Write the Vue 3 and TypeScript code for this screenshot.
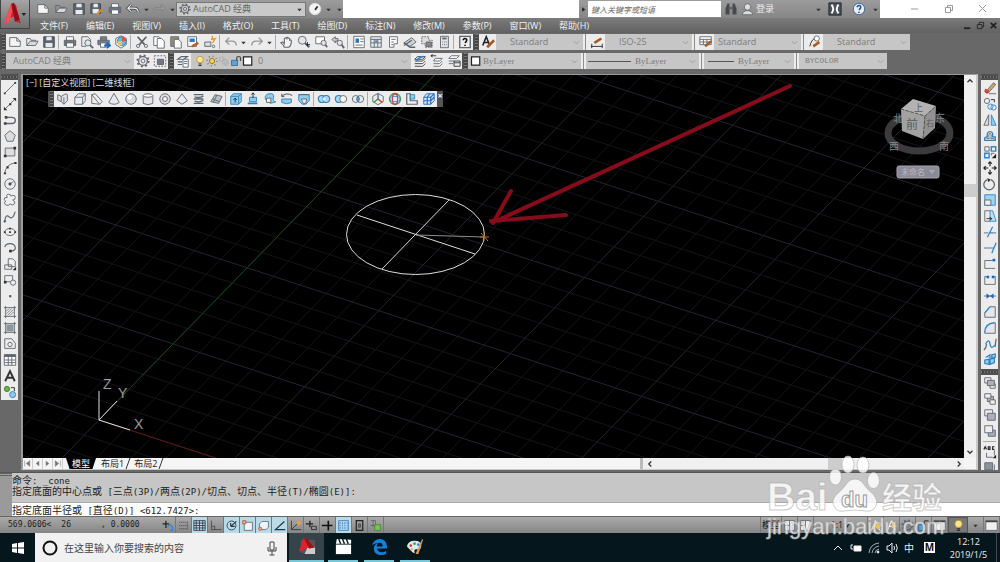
<script setup lang="ts">
import { ref } from 'vue'

interface Tool { icon: string; label: string; on?: boolean }

const icons: Record<string, string> = {
  blank: '<path d="M2 3h8l4 4v6H2z" fill="#f4f4f4"/><path d="M10 3v4h4"/>',
  open: '<path d="M2 12V4h4l1 2h5v2"/><path d="M2 12l4-5h9l-3 5z" fill="#d5d8dc"/>',
  save: '<path d="M2 2h12v12H2z" fill="#5d6670" stroke="#3c444c"/><path d="M5 2h6v4H5zM4 9h8v5H4z" fill="#e8eaec" stroke="none"/>',
  saveas: '<path d="M1 2h11v11H1z" fill="#5d6670" stroke="#3c444c"/><path d="M4 2h5v4H4zM3 8h7v5H3z" fill="#e8eaec" stroke="none"/><path d="M8 14l6-6" stroke="#d98a2b" stroke-width="2.4"/>',
  print: '<path d="M4 6V2h8v4" fill="#fff"/><path d="M1.500 6h13v6h-13z" fill="#6c737a"/><path d="M4 9h8v5H4z" fill="#fff"/>',
  undo: '<path d="M6 3L2 7l4 4M2 7h7q5 0 5 5" stroke="#3f464d" stroke-width="3"/><path d="M6 3L2 7l4 4M2 7h7q5 0 5 5" stroke="#eee" stroke-width="1.200"/>',
  redoTop: '<path d="M10 3l4 4-4 4M14 7H7q-5 0-5 5" stroke-width="2.400" stroke="#737373"/><path d="M10 3l4 4-4 4M14 7H7q-5 0-5 5" stroke="#b4b4b4"/>',
  redo: '<path d="M10 3l4 4-4 4M14 7H7q-5 0-5 5" stroke-width="1.600" stroke="#999"/>',
  gear: '<circle cx="8" cy="8" r="5" stroke-width="1.500"/><circle cx="8" cy="8" r="2.200"/><circle cx="8" cy="8" r="6.500" stroke-width="2" stroke-dasharray="2.200 2.900"/>',
  gauge: '<circle cx="8" cy="8" r="6.500" fill="#f4f4f4" stroke="#ddd"/><path d="M8 9l3-4" stroke="#333" stroke-width="2"/>',
  preview: '<path d="M2 2h7l3 3v3M2 2v11h5"/><circle cx="9" cy="9" r="3.500" fill="#dbe6ef"/><path d="M11.500 11.500L15 15" stroke-width="2.200"/>',
  publish: '<path d="M4 6V2h7v4M1 6h13v5H1z" fill="#777e86"/><path d="M4 9h6v5H4z" fill="#fff"/><path d="M8 12h6m-3-3l4 3-4 3" stroke="#1768c0" stroke-width="2"/>',
  globe: '<path d="M2 4l6-3 6 3v7l-6 4-6-4z" fill="#eee"/><circle cx="9" cy="7" r="5" fill="#67b6e8" stroke="#3d7cb8"/><path d="M9 2a5 5 0 0 1 5 5H9z" fill="#e35445" stroke="none"/><path d="M9 12a5 5 0 0 1-5-5h5z" fill="#e8cf42" stroke="none"/>',
  cut: '<path d="M3 2l8 9M13 2L5 11" stroke-width="2"/><circle cx="3.500" cy="12.500" r="1.800"/><circle cx="12.500" cy="12.500" r="1.800"/>',
  copy: '<path d="M2 2h6l2 2v8H2z" fill="#fff"/><path d="M6 4h5l3 3v8H6z" fill="#fff"/>',
  paste: '<path d="M2 2h9v11H2z" fill="#9a8b78"/><path d="M6 5h5l3 3v7H6z" fill="#fff"/>',
  match: '<path d="M2 2h10v11H2z" fill="#fff"/><path d="M4 4h6v4H4z" fill="#2f76bd" stroke="none"/><path d="M7 13l7-4" stroke="#b5642a" stroke-width="3"/>',
  block: '<path d="M2 8h7v5H2z" fill="#ddd"/><circle cx="12" cy="13" r="1.500"/><path d="M11 1l-1 4 4-1-3 5" stroke="#e79a28" stroke-width="1.600"/>',
  pan: '<path d="M5 14q-1-3-4-5l2-1 2 2V4q1-1 2 0V3q1-1 2 0v1q1-1 2 0v2q2-1 2 1 0 5-3 7z" fill="#f4f4f4" stroke-width="1.200"/>',
  zoomrt: '<circle cx="6" cy="6" r="4.500" fill="#e2e6ea"/><path d="M9 9l5 5" stroke-width="2.200"/><path d="M12 8v5M10 11h5" stroke="#222"/>',
  zoomwin: '<path d="M2 2h10v8H2z" fill="#fff"/><circle cx="11" cy="9" r="3" fill="#dbe2e8"/><path d="M13 11l2 3" stroke-width="2"/>',
  zoomprev: '<path d="M1 5l4-3v2h3v3H5v2z" fill="#c8c8c8"/><circle cx="10" cy="9" r="3" fill="#e2e6ea"/><path d="M12 11l3 4" stroke-width="2"/>',
  props: '<path d="M2 1.500h12v13H2z" fill="#fff"/><path d="M4 4h4v5H4z" fill="#2f76bd" stroke="none"/><path d="M9.500 4.500H13M9.500 7.500H13M4 11.500h8"/>',
  center: '<path d="M2 2h12v12H2z" fill="#e6eaee"/><path d="M2 5h12M6 5v9M10 5v9M2 9h12"/><path d="M7 6h3v3H7z" fill="#4a90d0" stroke="none"/>',
  palette: '<path d="M4 2h9v8H9v4H4z" fill="#fff"/><path d="M6 5h5M6 8h3M6 11h2"/>',
  sheets: '<path d="M1 9l9-6 5 5-7 5z" fill="#cfd2d6"/><path d="M1 12l9-6M1 9l7 5h6" stroke-width="1.500"/>',
  markup: '<path d="M2 2h8v4h4v8H6v-4H2z" stroke-dasharray="2 1" fill="#ddd"/><path d="M7 8h6v5H7z" fill="#888"/>',
  calc: '<path d="M4 1.500h9v13H4z" fill="#e2e4e6"/><path d="M6 4h5" stroke-width="2"/><path d="M6 8h5M6 11h5" stroke-dasharray="1 1"/>',
  help: '<path d="M2 1.500h12v13H2z" fill="#eee" stroke-width="1.500"/><path d="M6 6q0-2 2-2t2 2q0 1-2 3M8 11v1.500" stroke="#111" stroke-width="1.800"/>',
  textstyle: '<path d="M2 12L6 2l4 10M3.500 8.500h5" stroke="#222" stroke-width="1.800"/><path d="M7 14l8-8" stroke="#a85a24" stroke-width="3"/>',
  dimstyle: '<path d="M1 13h13M2 10v5M14 10v5" stroke="#222"/><path d="M5 9l8-5" stroke="#a85a24" stroke-width="3"/>',
  tablestyle: '<path d="M1 2h13v9H1z" fill="#fff"/><path d="M1 5h13M5 5v6M9 5v6M1 8h13"/><path d="M7 13l7-6" stroke="#a85a24" stroke-width="3"/>',
  mleader: '<path d="M2 13q2-8 6-9" stroke="#222"/><circle cx="10" cy="4" r="3" fill="#fff"/><path d="M6 13l7-5" stroke="#a85a24" stroke-width="3"/>',
  select: '<path d="M1.500 2h13v12h-13z" stroke-dasharray="2 1.500"/><path d="M5 6h7v6H5z" fill="#6e7780"/>',
  layers: '<path d="M6 3h7L9 6H2zM2 9h5M2 12h5" fill="#fff" stroke-width="1.300"/><path d="M8 6h6v9H8z" fill="#fff"/><path d="M9 8.500h4M9 11h4"/>',
  bulb: '<circle cx="8" cy="6" r="4.500" fill="#ffe58a" stroke="#b38a2c"/><path d="M6 12h4M6 14h4" stroke="#333" stroke-width="1.500"/>',
  sun: '<circle cx="8" cy="8" r="3.500" fill="#f7cf4b" stroke="#7d6a2e"/><circle cx="8" cy="8" r="6.500" stroke="#7d6a2e" stroke-width="1.800" stroke-dasharray="1.200 3.900"/>',
  freeze: '<path d="M2 3h6v5H2zM6 6h6v6H6z" stroke="#aaa"/><circle cx="11" cy="11" r="3" stroke="#aaa"/>',
  lock: '<path d="M2 7h8v7H2z" fill="#5aa3d9" stroke="#2b6090"/><path d="M9 7V4q0-2 2.500-2T14 4v4" stroke="#444" stroke-width="1.600"/>',
  swatch: '<path d="M2 2.500h11v11H2z" fill="#fff" stroke="#222" stroke-width="1.600"/>',
  layerA: '<path d="M5 3h9l-3 3H2zM2 8h9l3-3M2 11h9l3-3M2 14h9l3-3" stroke="#333" fill="#fff"/><path d="M4 8q3-5 8-5" stroke="#2f84d0" stroke-width="2"/>',
  layerB: '<path d="M1 2h6M1 2l2-1.500M1 2l2 1.500" stroke="#222"/><path d="M6 5h8l-3 3H4zM4 11h7l3-3M4 14h7l3-3" fill="#fff"/>',
  layerC: '<path d="M5 2h9l-3 3H2zM2 8h6M2 11h5" fill="#fff"/><path d="M8 8h7v6H8z" fill="#eee" stroke="#333"/><path d="M8 10h7" stroke="#333"/>',
  line: '<path d="M2 14L14 2" /><path d="M1 13h2v2H1zM13 1h2v2h-2z" fill="#333" stroke="none"/>',
  xline: '<path d="M2 14L14 2"/><path d="M1 11v4h4zM11 1h4v4zM7 7h2.500v2.500H7z" fill="#333" stroke="none"/>',
  pline: '<path d="M3 5h7q4 0 4 3.500T10 12H2" stroke-width="1.600"/><path d="M2 3.500h3v3H2zM1 10.500h3v3H1z" fill="#444" stroke="none"/>',
  polygon: '<path d="M8 2l6 5-2.500 7h-7L2 7z" fill="#ddd"/>',
  rect: '<path d="M2.500 3.500h11v9h-11z" fill="#ddd"/><path d="M1 11h3v3H1zM12 2h3v3h-3z" fill="#333" stroke="none"/>',
  arc: '<path d="M2 14Q3 4 14 2"/><path d="M1 13h2.500v2H1zM13 1h2.500v2.500H13zM4 6h2.500v2.500H4z" fill="#333" stroke="none"/>',
  circle: '<circle cx="8" cy="8" r="6"/><path d="M8 8l4-3"/><circle cx="8" cy="8" r="1.400" fill="#333"/>',
  cloud: '<path d="M5 5q-2-3 1-3.500 3-.5 3 2 5-2 5 1.500t-3 3q4 2 2 4.500t-5 0q-2 3-5 1t0-4.500q-3-1-1-3.500z" fill="#eee"/>',
  spline: '<path d="M2 14q1-9 5-5t7-6" stroke-width="1.300"/><circle cx="2" cy="14" r="1" fill="#333"/>',
  ellipse: '<ellipse cx="8" cy="8" rx="6" ry="4"/><path d="M1 7h2v2H1zM13 7h2v2h-2zM7 7h2v2H7zM7 3h2v2H7z" fill="#333" stroke="none"/>',
  ellarc: '<path d="M2 7q1-4 6-4t6 4-6 5" stroke-width="1.300"/><path d="M7 10h3v3H7z" fill="#333" stroke="none"/>',
  insert: '<path d="M6 2h5l3 3v6H6zM2 9h8v5H2z" fill="#eee"/><path d="M11 15h4v-4z" fill="#222" stroke="none"/>',
  mkblock: '<path d="M2 3h9v7H2z" fill="#eee"/><circle cx="11.500" cy="11" r="3" fill="#eee"/><path d="M1 9h3v3H1z" fill="#333" stroke="none"/>',
  point: '<path d="M7 7h2.500v2.500H7z" fill="#555" stroke="none"/>',
  hatch: '<path d="M3 1v14M13 1v14M1 3h14M1 13h14"/><path d="M4 7l3-3M4 10l6-6M5 12l7-7M8 12l4-4" stroke="#777"/>',
  gradient: '<path d="M4 4h8v8H4z" fill="#8d969e" stroke="none"/><path d="M3 1v14M13 1v14M1 3h14M1 13h14"/>',
  region: '<path d="M2 2h8l4 5v6H2z" fill="#eee"/><circle cx="8" cy="8.500" r="2.500"/>',
  table: '<path d="M1.500 2h13v12h-13z" fill="#fff"/><path d="M1.500 3h13" stroke-width="3"/><path d="M6 4v10M10 4v10M2 8h12M2 11h12"/>',
  mtext: '<path d="M2.500 14L8 2.500 13.500 14M4.500 10h7" stroke="#333" stroke-width="2.200"/>',
  addsel: '<circle cx="4.500" cy="4.500" r="3" fill="#66b346" stroke="#3f7e2a"/><circle cx="11" cy="11" r="3.500" fill="#8fc7ee" stroke="#3b82bb"/><path d="M9 3h4v4" stroke="#222"/>',
  polysolid: '<path d="M2 3l4 2v6L2 9zM6 5l5-3 2 1v7l-4 4-3-3M9 6v8" fill="#dfe4e8"/>',
  box: '<path d="M2 6l4-4h8v8l-3 4H2z" fill="#e9ecef"/><path d="M2 6h9l3-4M11 6v8"/>',
  wedge: '<path d="M2 13V3l4-1 8 9-3 3z" fill="#eee"/><path d="M2 3l9 11"/>',
  cone: '<path d="M8 1.500L14 12q-6 4-12 0z" fill="#e6e9ec"/>',
  sphere: '<circle cx="8" cy="8" r="6" fill="#d5dae0"/><circle cx="6.500" cy="6" r="2.500" fill="#fff" stroke="none"/>',
  cylinder: '<path d="M2.500 4v9q5.500 3 11 0V4" fill="#e3e6ea"/><ellipse cx="8" cy="4" rx="5.500" ry="2" fill="#fff"/>',
  torus: '<circle cx="8" cy="8" r="6" fill="#ddd"/><circle cx="8" cy="8" r="2.800" fill="#f4f4f4"/>',
  pyramid: '<path d="M8 2l6 8-6 4-6-4z" fill="#e9ecef"/>',
  helix: '<path d="M2 3h11M3 5.500q6 2 10-1M2 8h11M3 10.500q6 2 10-1M2 13h11" stroke-width="1.500"/>',
  planar: '<path d="M2 11l5-8 8 2-4 8z" fill="#b9bfc5"/><path d="M4 8l8 3M9 3.500l-4 8"/>',
  extrude: '<path d="M2 5l3-3h9v9l-3 3H2z" fill="#8fcdf0" stroke="#2f7fb8"/><path d="M2 5h9v9M11 5l3-3" stroke="#2f7fb8"/><path d="M7 12V7M5 9l2-2 2 2" stroke="#123" />',
  press: '<path d="M4 6h8v5H4z" fill="#8fcdf0" stroke="#2f7fb8"/><path d="M2 13h11" stroke="#2f7fb8" stroke-width="2"/><path d="M8 7V1M6 3l2-2 2 2" stroke="#123"/>',
  sweep: '<path d="M3 9q-2-6 4-7t5 4 2 5-6 2" fill="#8fcdf0" stroke="#2f7fb8"/><path d="M4 7h5v5H4z" fill="#f0f0f0"/>',
  revolve: '<path d="M2 8h11v4q-5 3-11 0z" fill="#8fcdf0" stroke="#2f7fb8"/><path d="M2 5q5-5 12-1M2 5V2M2 5h3" stroke="#444"/>',
  loft: '<path d="M2 3h12v7l-4 4H6l-4-4z" fill="#8fcdf0" stroke="#2f7fb8"/><path d="M2 3h12"/><path d="M5 8h6l-1 5H7z" fill="#f0f0f0"/>',
  union: '<circle cx="5.500" cy="8" r="4" fill="#a9d7f3" stroke="#2f7fb8" stroke-width="1.300"/><circle cx="10.500" cy="8" r="4" fill="#a9d7f3" stroke="#2f7fb8" stroke-width="1.300"/><circle cx="8" cy="8" r="2" fill="#d7eefb" stroke="none"/>',
  subtract: '<circle cx="5.500" cy="8" r="4" fill="#a9d7f3" stroke="#2f7fb8" stroke-width="1.300"/><circle cx="10.500" cy="8" r="4" fill="#f4f4f4"/>',
  intersect: '<circle cx="5.500" cy="8" r="4"/><circle cx="10.500" cy="8" r="4"/><path d="M8 5q3 3 0 6-3-3 0-6z" fill="#5bb1e6" stroke="#2f7fb8"/>',
  move3: '<path d="M8 1.500l6 3.500v6l-6 3.500L2 11V5z"/><path d="M8 8V2" stroke="#2f6fd0" stroke-width="1.600"/><path d="M8 8l-5 4" stroke="#2a9a3a" stroke-width="1.600"/><path d="M8 8l5 4" stroke="#c33" stroke-width="1.600"/>',
  rot3: '<circle cx="8" cy="8" r="6.300" stroke="#3a9a4a" stroke-width="1.500"/><ellipse cx="8" cy="8" rx="3" ry="6" stroke="#c44" stroke-width="1.500"/><ellipse cx="8" cy="8" rx="6" ry="3" stroke="#4a80d0"/>',
  align3: '<path d="M2 2h4v8h8v4H2z" fill="#f0f0f0" stroke-width="1.400"/><path d="M6 3h5v5H6z" fill="#8fcdf0" stroke="#2f7fb8"/>',
  array3: '<path d="M5 2h9v8l-4 4H2V6z" fill="#cfe6fa" stroke="#2868c8"/><path d="M2 6h8v8M10 6l4-4M2 10h8l4-4M6 6v8M6 6l3-4" stroke="#2868c8" stroke-width="1.300"/>',
  erase: '<path d="M5 10l7-8 2.500 2-7 8z" fill="#d9a066"/><path d="M3 9l4 4-3 1-2-2z" fill="#d8452a" stroke="#a33"/><path d="M7 14.500h8"/>',
  copyobj: '<circle cx="4.500" cy="4.500" r="3"/><circle cx="8.500" cy="11" r="3" stroke="#2f84d0"/><circle cx="12" cy="12" r="3" stroke="#2f84d0"/><path d="M9 3h4v3" stroke="#222"/>',
  mirror: '<path d="M6.500 2v12H1z" fill="#ddd"/><path d="M9.500 2v12H15z" fill="#8fcdf0" stroke="#2f84d0"/>',
  offset: '<path d="M2 13q-1-4 3-4-1-6 3-6t3 6h3v4z" stroke="#2f7fb8" stroke-width="1.500"/><path d="M4 11h3q-1-6 1-6t1 6h4" />',
  array: '<path d="M2 2h5v5H2z"/><path d="M9.500 2h5v5h-5zM2 9.500h5v5H2z" stroke="#2f84d0" stroke-width="1.600"/><path d="M9.500 12V9.500H13"/><path d="M10 15h5v-5z" fill="#222" stroke="none"/>',
  move: '<path d="M8 1v5M8 10v5M1 8h5M10 8h5M6 3l2-2 2 2M6 13l2 2 2-2M3 6L1 8l2 2M13 6l2 2-2 2" stroke="#222" stroke-width="1.300"/>',
  rotate: '<path d="M9 3a6 6 0 1 1-4 0" stroke-width="1.400"/><path d="M5 1l4 2-3 3z" fill="#333" stroke="none"/>',
  scale: '<path d="M2 2h12v12H2z" fill="#9fd3f2" stroke="#2f84d0"/><path d="M2 8h7v6H2z" fill="#eee"/>',
  stretch: '<path d="M8 2h3l4 12H8z" fill="#bfe1f6" stroke="#2f84d0"/><path d="M8 2H2v12h6"/><path d="M4 11h6M8 9l2 2-2 2" stroke="#222"/>',
  trim: '<path d="M1 9h5M12 9h3"/><path d="M5 14l6-12M8 9h4" stroke="#2f84d0" stroke-width="1.400"/>',
  extend: '<path d="M1 8h7"/><path d="M8 8h4M10 14l5-12" stroke="#2f84d0" stroke-width="1.400"/>',
  breakpt: '<path d="M14 4H2v9h12" /><path d="M8 4h5" stroke="#2f84d0"/><path d="M11 2h3v3h-3z" fill="#1768c0" stroke="none"/>',
  break: '<path d="M4 4H2v9h12V4h-2"/><path d="M4 3h3v3H4zM10 3h3v3h-3z" fill="#1768c0" stroke="none"/>',
  join: '<path d="M1 8h14"/><path d="M4 5l4 3-4 3zM12 5L8 8l4 3z" fill="#1768c0" stroke="none"/>',
  chamfer: '<path d="M8 2h6v12H2V9l6-7" fill="#e3e6ea"/><path d="M2 9l6-7" stroke="#2f84d0" stroke-width="1.500"/>',
  fillet: '<path d="M12 2h2v12H2v-2" fill="#e3e6ea"/><path d="M2 13Q2 3 13 2" fill="#e3e6ea" stroke="#2f84d0" stroke-width="1.500"/>',
  blend: '<path d="M1 15q3-3 3-7M15 2q-1 6-1 9" stroke-width="1.400"/><path d="M3 8q4-7 5 0t6 1" stroke="#2f84d0" stroke-width="1.500"/>',
  explode: '<path d="M2 8l5-1v6l-5-1zM8 7l5-1v5l-5 2zM3 5l5-3v4M10 2l4-1v4l-4 1z" fill="#8fcdf0" stroke="#2f7fb8" stroke-width="1.300"/>',
  front: '<path d="M2 2h7v6H2zM8 9h6v5H8z" fill="#eee"/><path d="M5 5h8v6H5z" fill="#aab1b8"/>',
  back: '<path d="M5 5h7v6H5z" fill="#aab1b8"/><path d="M2 2h7v5H2zM8 9h6v5H8z" fill="#eee"/>',
  above: '<path d="M2 2h9v7H2z" fill="#eee"/><path d="M5 6h9v8H5z" fill="#aab1b8"/>',
  under: '<path d="M6 7h8v7H6z" fill="#aab1b8"/><path d="M2 2h9v8H2z" fill="#eee"/>',
  abc: '<path d="M4 9v5h7M13 6v6" /><path d="M1 5l1.500-3L4 5M6 2v3h2V2zM13 2h-2v3h2" stroke="#222" stroke-width="1.300"/><path d="M11 15h4v-4z" fill="#222" stroke="none"/>',
  hatchback: '<path d="M2 2h9v8H2z" fill="#8b949c"/><path d="M13 4v10H6"/>',
  infer: '<path d="M2 6h8M6 2v9" stroke="#222" stroke-width="1.500"/><path d="M8 10l3-3 3 3v4h-3" stroke="#2f84d0" stroke-width="1.500"/>',
  snap: '<path d="M3 4h9M3 8h9M3 12h9" stroke-dasharray="1 1.500" stroke="#333" stroke-width="1.500"/><path d="M13 3v10"/>',
  grid: '<path d="M1 2h14v12H1zM1 5h14M1 8h14M1 11h14M4 2v12M8 2v12M12 2v12" stroke="#334"/>',
  ortho: '<path d="M3 2v11h12M3 9h4v4" stroke="#444"/>',
  polar: '<circle cx="8" cy="8" r="5.500" stroke="#234"/><path d="M7 9l7-6M7 9h5M7 9V5" stroke="#234" stroke-width="1.400"/>',
  osnap: '<path d="M4 4h10v10H4z" fill="#eef4f8"/><path d="M2 2h4v4H2z" fill="#f3a48a" stroke="#c0563a"/>',
  osnap3: '<path d="M3 6l3-3h8v7l-3 3H3z" fill="#eef4f8"/><circle cx="4" cy="12" r="2" fill="#f3a48a" stroke="#c0563a"/>',
  otrack: '<path d="M14 3L3 13h12" stroke="#234" stroke-width="1.500"/>',
  ducs: '<path d="M3 2v11h12M3 13l8-8" stroke="#333"/><path d="M12 1l1 3 3 1-3 1-1 3-1-3-3-1 3-1z" fill="#f0a43c" stroke="none"/>',
  dyn: '<path d="M1 6h9M6 2v8" stroke="#222" stroke-width="1.600"/><path d="M8 9h6v4H8z" stroke="#222"/>',
  lwt: '<path d="M1 8h13M9 2v12" stroke="#111" stroke-width="2"/>',
  transp: '<path d="M2 2h12v12H2z" fill="#b9d8f0" stroke="#3b78b0"/><path d="M3 5h10M3 8h10M3 11h10" stroke="#4d8cc4" stroke-dasharray="1.500 1.500" stroke-width="2"/>',
  qp: '<path d="M4 2h8v12H4z" stroke="#222" stroke-width="1.500"/><path d="M7 6h2v4H7z" stroke="#333"/>',
  cycle: '<path d="M2 2h6v6H2M5 1v9" /><path d="M7 7h7v7H7z" fill="#7ebf5a" stroke="#44852c"/>',
  star: '<path d="M8 2L3 14M8 2l5 12M5 9h6" stroke="#eee" stroke-width="1.500"/><circle cx="11" cy="9" r="3" fill="#f2c544" stroke="none"/>',
  vp: '<path d="M2 2h12v12H2zM8 2v12M2 8h6" fill="#f0f0f0"/>',
  screen: '<path d="M1 2h14v12H1z" fill="#f0f0f0"/><path d="M1 3h14" stroke="#444" stroke-width="2"/>',
  binocular: '<path d="M2 14V7l2-5h2v12zM14 14V7l-2-5h-2v12z" fill="#444"/><path d="M6 7h4" stroke-width="3"/>',
  user: '<circle cx="8" cy="5.500" r="4" fill="#ddd"/><path d="M1.500 15q1-5 6.500-5t6.500 5z" fill="#ddd"/>',
  exchange: '<path d="M1 1h14v14H1z" fill="#4a545e" stroke="#222"/><path d="M4 3q4 5 0 10M12 3q-4 5 0 10" stroke="#fff" stroke-width="2.200"/>',
  question: '<circle cx="8" cy="8" r="6.500" fill="#e8eef6" stroke="#3c5f94"/><path d="M6 6q0-2 2-2t2 2q0 1-2 3M8 11v1.500" stroke="#1f4fa0" stroke-width="1.800"/>',
  down: '<path d="M3 6h10l-5 6z" fill="#333" stroke="none"/>',
  first: '<path d="M3 3v10M12 3L6 8l6 5z" fill="#777" stroke="#777"/>',
  prev: '<path d="M11 3L5 8l6 5z" fill="#777" stroke="none"/>',
  next: '<path d="M5 3l6 5-6 5z" fill="#777" stroke="none"/>',
  last: '<path d="M13 3v10M4 3l6 5-6 5z" fill="#777" stroke="#777"/>',
  up2: '<path d="M4 10l4-4 4 4" stroke="#333" stroke-width="2"/>',
  down2: '<path d="M4 6l4 4 4-4" stroke="#333" stroke-width="2"/>',
  left2: '<path d="M10 4L6 8l4 4" stroke="#333" stroke-width="2"/>',
  right2: '<path d="M6 4l4 4-4 4" stroke="#333" stroke-width="2"/>',
}

const t = (list: string): Tool[] => list.split(' ').map((s) => {
  const [icon, label] = s.split(':')
  return { icon, label: label ?? icon }
})

const quick = t('blank:新建 open:打开 save:保存 saveas:另存为 print:打印 undo:放弃 down:更多 redoTop:重做 down:更多')
const menus = ['文件(F)', '编辑(E)', '视图(V)', '插入(I)', '格式(O)', '工具(T)', '绘图(D)', '标注(N)', '修改(M)', '参数(P)', '窗口(W)', '帮助(H)']
const standard = t('blank:新建 open:打开 save:保存 | print:打印 preview:打印预览 publish:发布 globe:三维打印 | cut:剪切 copy:复制 paste:粘贴 match:特性匹配 block:块编辑器 | redo:放弃 down:更多 redo:重做 down:更多 | pan:平移 zoomrt:实时缩放 zoomwin:窗口缩放 zoomprev:缩放上一个 | props:特性 center:设计中心 palette:工具选项板 sheets:图纸集 markup:标记集 calc:计算器 | help:帮助')
standard.forEach((x) => { if (x.label === '放弃') x.on = true })
const styles = [
  { icon: 'textstyle', label: '文字样式', value: 'Standard', wide: true },
  { icon: 'dimstyle', label: '标注样式', value: 'ISO-25', wide: true },
  { icon: 'tablestyle', label: '表格样式', value: 'Standard', wide: false },
  { icon: 'mleader', label: '多重引线样式', value: 'Standard', wide: true },
]
const drawTools = t('line:直线 xline:构造线 pline:多段线 polygon:多边形 rect:矩形 arc:圆弧 circle:圆 cloud:修订云线 spline:样条曲线 ellipse:椭圆 ellarc:椭圆弧 insert:插入块 mkblock:创建块 point:点 hatch:图案填充 gradient:渐变色 region:面域 table:表格 mtext:多行文字 addsel:添加选定对象')
const modTools = t('erase:删除 copyobj:复制 mirror:镜像 offset:偏移 array:阵列 move:移动 rotate:旋转 scale:缩放 stretch:拉伸 trim:修剪 extend:延伸 breakpt:打断于点 break:打断 join:合并 chamfer:倒角 fillet:圆角 blend:光顺曲线 explode:分解')
const orderTools = t('front:前置 back:后置 above:置于对象之上 under:置于对象之下 | abc:文字前置 hatchback:图案后置')
const solidTools = t('polysolid:多段体 box:长方体 wedge:楔体 cone:圆锥体 sphere:球体 cylinder:圆柱体 torus:圆环体 pyramid:棱锥体 helix:螺旋 planar:平面曲面 | extrude:拉伸 press:按住并拖动 sweep:扫掠 revolve:旋转 loft:放样 | union:并集 subtract:差集 intersect:交集 | move3:三维移动 rot3:三维旋转 align3:三维对齐 array3:三维阵列')
const statusTools: Tool[] = t('infer:推断约束 snap:捕捉 grid:栅格 ortho:正交 polar:极轴 osnap:对象捕捉 osnap3:三维对象捕捉 otrack:对象捕捉追踪 ducs:动态UCS dyn:动态输入 lwt:线宽 transp:透明度 qp:快捷特性 cycle:选择循环')
  .map((x) => ({ ...x, on: ['grid', 'polar', 'osnap', 'osnap3', 'otrack', 'transp'].includes(x.icon) }))

/* Ground grid: two families of parallel lines through the UCS origin. */
const origin = { x: 99, y: 420 }
const slopeX = 0.326
const slopeY = 1.027
interface Seg { x1: number; y1: number; x2: number; y2: number; major: boolean }
const grid: Seg[] = []
for (let k = -50; k <= 20; k++) {
  const c = origin.y - slopeX * origin.x + 20.05 * k
  grid.push({ x1: 0, y1: c, x2: 1600, y2: c + slopeX * 1600, major: k % 5 === 0 })
}
for (let m = -16; m <= 60; m++) {
  const c = origin.x + origin.y / slopeY + 34.64 * m
  grid.push({ x1: c, y1: 0, x2: c - 900 / slopeY, y2: 900, major: m % 5 === 0 })
}
grid.sort((a, b) => Number(a.major) - Number(b.major))

const parts = (s: string) => s.match(/[\u3000-\u9fff]+|[^\u3000-\u9fff]+/g) ?? []
const history = ['命令: _cone', '指定底面的中心点或 [三点(3P)/两点(2P)/切点、切点、半径(T)/椭圆(E)]:']
const prompt = '指定底面半径或 [直径(D)] <612.7427>:'
const isCjk = (s: string) => /[\u3000-\u9fff]/.test(s)
const command = ref('')
const search = ref('')
const keyword = ref('')
</script>

<template>
  <div class="desktop">
    <header class="head">
      <button class="app" aria-label="应用程序菜单">
        <svg viewBox="0 0 30 29"><path d="M3 25L11 3l5 1 5 20-6-2-1-5-4 1-2 5z" fill="#d3202a" /><path d="M11 3l3-1 6 18-5 2z" fill="#8d0f18" /><path d="M3 25l8-22 1 8-3 12z" fill="#f0505a" /><path d="M22 13h5l-2.500 3z" fill="#222" /></svg>
      </button>
      <div class="headrows">
        <div class="title">
          <div class="quick">
            <button v-for="(q, i) in quick" :key="i" :class="['tool', { arrow: q.icon === 'down' }]" :aria-label="q.label"><svg class="ic" viewBox="0 0 16 16" v-html="icons[q.icon]" /></button>
            <label class="ws"><svg class="ic" viewBox="0 0 16 16" v-html="icons.gear" /><select aria-label="工作空间"><option>AutoCAD 经典</option></select><svg class="tri" viewBox="0 0 16 16" v-html="icons.down" /></label>
            <button class="tool" aria-label="性能"><svg class="ic" viewBox="0 0 16 16" v-html="icons.gauge" /></button>
            <button class="tool arrow" aria-label="更多"><svg class="ic" viewBox="0 0 16 16" v-html="icons.down" /></button>
            <button class="tool arrow end" aria-label="自定义"><svg class="ic" viewBox="0 0 16 16" v-html="icons.down" /></button>
          </div>
          <div class="info">
            <button class="tool arrow" aria-label="展开"><svg class="ic" viewBox="0 0 16 16"><path d="M5 3l7 5-7 5z" fill="#111" /></svg></button>
            <input v-model="keyword" class="kw" aria-label="搜索帮助" placeholder="键入关键字或短语">
            <button class="tool" aria-label="搜索"><svg class="ic" viewBox="0 0 16 16" v-html="icons.binocular" /></button>
            <button class="login"><svg class="ic" viewBox="0 0 16 16" v-html="icons.user" />登录</button>
            <button class="tool arrow" aria-label="更多"><svg class="ic" viewBox="0 0 16 16" v-html="icons.down" /></button>
            <button class="tool wide" aria-label="Exchange"><svg class="ic" viewBox="0 0 16 16" v-html="icons.exchange" /></button>
            <button class="tool wide" aria-label="帮助"><svg class="ic" viewBox="0 0 16 16" v-html="icons.question" /></button>
            <button class="tool arrow" aria-label="更多"><svg class="ic" viewBox="0 0 16 16" v-html="icons.down" /></button>
          </div>
          <div class="win">
            <button aria-label="最小化"><svg viewBox="0 0 10 10"><path d="M1 5h7" /></svg></button>
            <button aria-label="还原"><svg viewBox="0 0 10 10"><path d="M1.500 3.500h5v5h-5zM3.500 3V1.500h5v5H7" /></svg></button>
            <button aria-label="关闭"><svg viewBox="0 0 10 10"><path d="M1 1l7 7M8 1L1 8" /></svg></button>
          </div>
        </div>
        <nav class="menu">
          <button v-for="m in menus" :key="m">{{ m }}</button>
          <span class="docwin">
            <button aria-label="最小化文档"><svg viewBox="0 0 10 10"><path d="M1 8h7" stroke-width="2" /></svg></button>
            <button aria-label="还原文档"><svg viewBox="0 0 10 10"><path d="M1.500 4h5v4.500h-5zM3.500 4V1.500h5v5H7" /></svg></button>
            <button aria-label="关闭文档"><svg viewBox="0 0 10 10"><path d="M2 2l6 6M8 2L2 8" stroke-width="2" /></svg></button>
          </span>
        </nav>
      </div>
    </header>

    <div class="bars">
      <div class="bar">
        <i class="grip" />
        <div class="panel">
          <template v-for="(b, i) in standard" :key="i">
            <i v-if="b.icon === '|'" class="sep" />
            <button v-else :class="['tool', { arrow: b.icon === 'down', flip: b.on }]" :aria-label="b.label"><svg class="ic" viewBox="0 0 16 16" v-html="icons[b.icon]" /></button>
          </template>
        </div>
        <i class="grip" />
        <div class="panel grey">
          <template v-for="(s, i) in styles" :key="s.label">
            <i v-if="i" class="sep lit" />
            <button class="tool lit" :aria-label="s.label"><svg class="ic" viewBox="0 0 16 16" v-html="icons[s.icon]" /></button>
            <label :class="['pick', 'style', { wide: s.wide }]"><select :aria-label="s.label"><option>{{ s.value }}</option></select><svg class="chev" viewBox="0 0 8 8"><path d="M1 2.500l3 3 3-3" /></svg></label>
          </template>
        </div>
      </div>
      <div class="bar">
        <i class="grip" />
        <div class="panel grey">
          <label class="pick space"><select aria-label="工作空间设置"><option>AutoCAD 经典</option></select><svg class="chev" viewBox="0 0 8 8"><path d="M1 2.500l3 3 3-3" /></svg></label>
          <button class="tool lit" aria-label="设置"><svg class="ic" viewBox="0 0 16 16" v-html="icons.gear" /></button>
          <button class="tool lit" aria-label="选择"><svg class="ic" viewBox="0 0 16 16" v-html="icons.select" /></button>
        </div>
        <i class="grip" />
        <div class="panel grey">
          <button class="tool lit" aria-label="图层特性"><svg class="ic" viewBox="0 0 16 16" v-html="icons.layers" /></button>
          <label class="pick layer">
            <span class="marks"><svg v-for="n in ['bulb', 'sun', 'freeze', 'lock', 'swatch']" :key="n" viewBox="0 0 16 16" v-html="icons[n]" /></span>
            <select aria-label="图层"><option>0</option></select><svg class="chev" viewBox="0 0 8 8"><path d="M1 2.500l3 3 3-3" /></svg>
          </label>
          <button v-for="n in ['layerA', 'layerB', 'layerC']" :key="n" class="tool lit" :aria-label="n"><svg class="ic" viewBox="0 0 16 16" v-html="icons[n]" /></button>
        </div>
        <i class="grip" />
        <div class="panel grey">
          <label class="pick prop"><span class="marks"><svg viewBox="0 0 16 16" v-html="icons.swatch" /></span><select aria-label="颜色"><option>ByLayer</option></select><svg class="chev" viewBox="0 0 8 8"><path d="M1 2.500l3 3 3-3" /></svg></label>
          <i class="sep lit" />
          <label class="pick prop"><span class="rule long" /><select aria-label="线型"><option>ByLayer</option></select><svg class="chev" viewBox="0 0 8 8"><path d="M1 2.500l3 3 3-3" /></svg></label>
          <i class="sep lit" />
          <label class="pick prop weight"><span class="rule" /><select aria-label="线宽"><option>ByLayer</option></select><svg class="chev" viewBox="0 0 8 8"><path d="M1 2.500l3 3 3-3" /></svg></label>
          <i class="sep lit" />
          <label class="pick prop plot"><select aria-label="打印样式"><option>BYCOLOR</option></select><svg class="chev" viewBox="0 0 8 8"><path d="M1 2.500l3 3 3-3" /></svg></label>
        </div>
      </div>
    </div>

    <main class="work">
      <aside class="side">
        <i class="hgrip" />
        <button v-for="b in drawTools" :key="b.icon" class="tool" :aria-label="b.label"><svg class="ic" viewBox="0 0 16 16" v-html="icons[b.icon]" /></button>
      </aside>

      <section class="doc">
        <div class="canvas">
          <svg class="scene" role="img" aria-label="三维视图">
            <g transform="translate(-23 -75)">
              <line v-for="(g, i) in grid" :key="i" :x1="g.x1" :y1="g.y1" :x2="g.x2" :y2="g.y2" :stroke="g.major ? '#232430' : '#141519'" />
              <path d="M99 420L522-15" stroke="#12480f" />
              <path d="M99 420l920 300" stroke="#5c1414" />
              <path d="M99 391v29l18-19M99 420l31 10" stroke="#e0dcdc" fill="none" />
              <g class="axis"><text x="103" y="389">Z</text><text x="118" y="398">Y</text><text x="134" y="429">X</text></g>
              <g stroke="#dcdcdc" fill="none">
                <ellipse cx="415.500" cy="234.500" rx="69" ry="40" />
                <path d="M357 215l118 39M449 200l-67 69" />
                <path d="M416 235l68 2" stroke="#8d8d86" />
              </g>
              <path d="M480 237h9M484 232v9M481 233l7 8" stroke="#b0722a" />
              <g stroke="#860c1b" stroke-linecap="round" fill="none" stroke-width="4">
                <path d="M790 86L494 222" />
                <path d="M511 191l-18 32M566 215l-75 6" />
              </g>
            </g>
          </svg>
          <p class="viewlabel">[−] [自定义视图] [二维线框]</p>
          <div class="float">
            <i class="grip" />
            <div class="panel">
              <template v-for="(b, i) in solidTools" :key="i">
                <i v-if="b.icon === '|'" class="sep" />
                <button v-else class="tool" :aria-label="b.label"><svg class="ic" viewBox="0 0 16 16" v-html="icons[b.icon]" /></button>
              </template>
            </div>
            <button class="x" aria-label="关闭工具栏">×</button>
          </div>
          <svg class="cube" viewBox="880 95 76 88">
            <ellipse cx="918" cy="133" rx="31" ry="18" fill="none" stroke="#3b3b3d" stroke-width="7" />
            <g fill="#858585" font-size="10"><text x="892" y="122">北</text><text x="934" y="122">东</text><text x="888" y="150">西</text><text x="938" y="150">南</text></g>
            <path d="M900 109l12-10 23 7-11 10z" fill="#b2b2b2" /><path d="M900 109l24 7-2 23-21-8z" fill="#a2a2a2" /><path d="M924 116l11-10-1 22-12 11z" fill="#929292" />
            <path d="M900 109l24 7 11-10M924 116l-2 23" fill="none" stroke="#555" stroke-dasharray="3 2" />
            <g fill="#5c5c5c"><text x="913" y="111" font-size="9">上</text><text x="905" y="129" font-size="12">前</text><text x="925" y="126" font-size="8">右</text></g>
            <rect x="896" y="166" width="42" height="12" rx="2" fill="#8b8b97" stroke="#a4a4ae" />
            <text x="900" y="175" font-size="8" fill="#b9b9c2">未命名</text><path d="M928 170h6l-3 4z" fill="#a9a9b4" />
          </svg>
          <div class="vscroll">
            <button aria-label="向上"><svg class="ic" viewBox="0 0 16 16" v-html="icons.up2" /></button>
            <i class="thumb" />
            <button aria-label="向下"><svg class="ic" viewBox="0 0 16 16" v-html="icons.down2" /></button>
          </div>
        </div>
        <div class="tabs">
          <button v-for="n in ['first', 'prev', 'next', 'last']" :key="n" class="nav" :aria-label="n"><svg class="ic" viewBox="0 0 16 16" v-html="icons[n]" /></button>
          <button class="tab on">模型</button><button class="tab">布局1</button><svg class="slash" viewBox="0 0 6 11"><path d="M5 0L1 11" /></svg><button class="tab">布局2</button><svg class="slash" viewBox="0 0 6 11"><path d="M5 0L1 11" /></svg>
          <div class="hscroll">
            <button aria-label="向左"><svg class="ic" viewBox="0 0 16 16" v-html="icons.left2" /></button>
            <i class="thumb" />
            <button aria-label="向右"><svg class="ic" viewBox="0 0 16 16" v-html="icons.right2" /></button>
          </div>
        </div>
      </section>

      <aside class="side right">
        <i class="hgrip" />
        <button v-for="b in modTools" :key="b.icon" class="tool" :aria-label="b.label"><svg class="ic" viewBox="0 0 16 16" v-html="icons[b.icon]" /></button>
        <i class="hgrip mid" />
        <template v-for="(b, i) in orderTools" :key="i">
          <i v-if="b.icon === '|'" class="hsep" />
          <button v-else class="tool" :aria-label="b.label"><svg class="ic" viewBox="0 0 16 16" v-html="icons[b.icon]" /></button>
        </template>
      </aside>
    </main>

    <section class="cmd">
      <i class="cmdgrip" />
      <div class="log">
        <p v-for="h in history" :key="h"><span v-for="(s, i) in parts(h)" :key="i" :class="{ lat: !isCjk(s) }">{{ s }}</span></p>
      </div>
      <label class="entry"><span class="ask"><span v-for="(s, i) in parts(prompt)" :key="i" :class="{ lat: !isCjk(s) }">{{ s }}</span></span><input v-model="command" aria-label="命令行"></label>
    </section>

    <footer class="status">
      <div class="coords"><span>569.0606&lt;</span><span>26</span><span class="z">, 0.0000</span></div>
      <button v-for="b in statusTools" :key="b.icon" :class="['sb', { on: b.on }]" :aria-label="b.label"><svg class="ic" viewBox="0 0 16 16" v-html="icons[b.icon]" /></button>
      <div class="tray2">
        <button class="sb model">模型</button>
        <button v-for="(n, i) in ['vp', 'vp']" :key="i" class="sb" aria-label="视口"><svg class="ic" viewBox="0 0 16 16" v-html="icons[n]" /></button>
        <button class="sb scale">1:1 ▾</button>
        <button v-for="(n, i) in ['star', 'star', 'gear', 'lock', 'screen']" :key="'s' + i" class="sb" :aria-label="n"><svg class="ic" viewBox="0 0 16 16" v-html="icons[n]" /></button>
        <button class="sb lamp" aria-label="隔离对象"><svg class="ic" viewBox="0 0 16 16" v-html="icons.bulb" /></button>
        <button class="sb" aria-label="更多"><svg class="tri" viewBox="0 0 16 16" v-html="icons.down" /></button>
        <button class="sb" aria-label="全屏"><svg class="ic" viewBox="0 0 16 16" v-html="icons.screen" /></button>
      </div>
    </footer>

    <footer class="task">
      <button class="start" aria-label="开始"><svg viewBox="0 0 12 12"><path d="M0 2l5-1v4.500H0zM6 1l6-1v5.500H6zM0 6.500h5V11l-5-1zM6 6.500h6V12l-6-1z" fill="#fff" /></svg></button>
      <label class="search">
        <svg viewBox="0 0 16 16"><circle cx="8" cy="8" r="6.500" fill="none" stroke="#111" stroke-width="2" /></svg>
        <input v-model="search" aria-label="搜索" placeholder="在这里输入你要搜索的内容">
        <svg viewBox="0 0 16 16"><path d="M6 2h4v8H6zM4 7v4h8V7M8 11v4M5.500 15h5" fill="none" stroke="#444" /></svg>
      </label>
      <button class="ta cur" aria-label="AutoCAD"><svg viewBox="0 0 20 20"><path d="M4 3h15v14H4z" fill="#555" /><path d="M11 11h8v7H8z" fill="#ccc" /><path d="M2 15L7 1l4 1 7 9-5 1-2-1-4 3z" fill="#e0222c" /><path d="M7 1l4 1 7 9-5 1z" fill="#9d101a" /></svg></button>
      <button class="ta" aria-label="电影和电视"><svg viewBox="0 0 20 20"><path d="M2 8h16v10H2z" fill="#fff" /><path d="M2 7l1-5 15 1v4z" fill="#fff" /><path d="M5 2l2 5M9 2l2 5M13 2l2 5" stroke="#08191f" stroke-width="1.500" /></svg></button>
      <button class="ta" aria-label="Edge"><svg viewBox="0 0 20 20"><path d="M2 9Q4 2 10.500 2T18 10v2H7.500q.5 4 5 4 2.500 0 4.500-1.300v3Q15 19 12 19q-8 0-8-7 0-4 5-6-2 1.500-2 4h6.500q0-4-3.500-4-5 0-8 3z" fill="#1482dc" /></svg></button>
      <button class="ta" aria-label="画图"><svg viewBox="0 0 20 20"><path d="M1 10q1-6 8-6t7 5-4 4-3 3-8-6z" fill="#dceaf5" /><circle cx="5" cy="9" r="1.400" fill="#d33" /><circle cx="9" cy="7" r="1.400" fill="#3a3" /><circle cx="13" cy="8" r="1.400" fill="#28c" /><circle cx="6" cy="13" r="1.300" fill="#eb3" /><path d="M10 18l7-16 1 1-5 15z" fill="#d99a55" /></svg></button>
      <div class="systray">
        <svg viewBox="0 0 12 12"><path d="M2 8l4-4 4 4" /></svg>
        <svg viewBox="0 0 12 12"><path d="M1 3v4h2M1 3h2" /><path d="M4 4h7v5H4z" fill="#fff" /></svg>
        <svg viewBox="0 0 12 12"><path d="M1 11Q2 2 11 1M4 11q1-6 7-7M7 11q0-3 4-4" stroke="#aab" /><circle cx="10" cy="10" r="1" fill="#fff" /></svg>
        <svg viewBox="0 0 12 12"><path d="M1 4h2l3-3v10L3 8H1zM8 4q1 2 0 4M10 2q2.500 4 0 8" /></svg>
        <span>中</span>
        <b>M</b>
      </div>
      <div class="clock"><span>12:12</span><span>2019/1/5</span></div>
    </footer>

    <svg class="mark" viewBox="760 450 190 90" role="img" aria-label="Baidu 经验">
      <g fill="#fff" fill-opacity=".82" stroke="#a9a9a9" stroke-opacity=".6">
        <text x="767" y="510" font-size="39" class="heavy">Bai</text>
        <ellipse cx="848" cy="464.500" rx="6" ry="8.500" /><ellipse cx="863" cy="465" rx="6" ry="8" /><ellipse cx="835.500" cy="477" rx="6" ry="8" /><ellipse cx="873.500" cy="480.500" rx="6" ry="8" />
        <path d="M855 479q6 0 10 7 3 4 8 8 7 8 1 15-3 3-8 2-11-2-22 0-6 1-9-3-5-7 2-14 5-4 8-8 4-7 10-7z" />
        <text x="882" y="508" font-size="30" class="han">经验</text>
        <text x="767" y="534" font-size="22" class="url">jingyan.baidu.com</text>
      </g>
      <text x="841" y="507" font-size="22" class="du">du</text>
    </svg>
  </div>
</template>

<style>
html, body { margin: 0; }
body { background: #686868; }
</style>

<style scoped>
.desktop { position: relative; display: flex; flex-direction: column; height: 100vh; min-height: 540px; overflow: hidden; background: #686868; font: 9px/12px "Open Sans", "Noto Sans CJK SC", sans-serif; color: #222; }
.desktop * { box-sizing: border-box; }
button { border: 0; padding: 0; margin: 0; background: none; font: inherit; color: inherit; display: flex; align-items: center; justify-content: center; flex: none; }
select, input { border: 0; outline: 0; margin: 0; padding: 0; background: none; font: inherit; color: inherit; min-width: 0; appearance: none; }
svg { display: block; flex: none; }
p { margin: 0; }
i { display: block; flex: none; }
.ic { width: 14px; height: 14px; fill: none; stroke: #5c646c; }
.tool { width: 17px; height: 16px; }
.tool.arrow { width: 9px; }
.tool.arrow .ic, .tri { width: 7px; height: 7px; }
.tool.flip .ic { transform: scaleX(-1); }

.head { display: flex; height: 33px; flex: none; background: linear-gradient(#969696, #888 50%, #7d7d7d 52%, #616161); }
.app { width: 30px; height: 29px; background: linear-gradient(#a5a5a5, #707070); border: 1px solid #444; border-top: 0; }
.app svg { width: 28px; height: 27px; }
.headrows { flex: 1; min-width: 0; display: flex; flex-direction: column; }
.title { display: flex; height: 18px; background: #fff; }
.quick { display: flex; align-items: center; padding-left: 4px; width: 313px; background: linear-gradient(#9c9c9c, #868686); }
.quick .tool { width: 18px; }
.quick .tool.arrow { width: 8px; }
.quick .tool.end { margin-left: 3px; }
.ws { display: flex; align-items: center; flex: 1; height: 15px; padding: 0 2px; background: #c9c9c9; border: 1px solid #777; color: #666; }
.ws .ic { width: 12px; height: 12px; }
.ws select { flex: 1; margin-left: 2px; }
.info { display: flex; align-items: center; margin-left: auto; width: 301px; background: linear-gradient(#9c9c9c, #868686); }
.kw { flex: 1; height: 16px; padding-left: 3px; background: #fff; font-style: italic; font-size: 8px; margin-right: 1px; }
.kw::placeholder { color: #666; opacity: 1; }
.login { width: 75px; gap: 2px; color: #eee; justify-content: flex-start; padding-left: 2px; }
.login .ic { width: 13px; }
.tool.wide { width: 24px; }
.win { display: flex; width: 120px; align-items: center; justify-content: space-around; padding-left: 18px; }
.win svg { width: 10px; height: 10px; fill: none; stroke: #999; }
.menu { display: flex; align-items: center; flex: 1; padding-left: 10px; gap: 18px; color: #f0f0f0; }
.docwin { display: flex; gap: 4px; margin-left: auto; padding-right: 2px; }
.docwin svg { width: 9px; height: 9px; fill: none; stroke: #222; }

.bars { display: flex; flex-direction: column; gap: 3px; height: 41px; flex: none; padding-top: 1px; }
.bar { display: flex; height: 16px; }
.grip { width: 6px; background: repeating-linear-gradient(#777 0 1px, #444 1px 3px) center / 3px 100% no-repeat #505050; }
.panel { display: flex; align-items: center; background: #ececec; height: 16px; }
.panel.grey { background: #c6c6c6; }
.lit { background: #ececec; }
.sep { width: 4px; height: 14px; border-left: 1px solid #ececec; border-right: 2px solid #ececec; background: #aaa; }
.float .sep { width: 3px; border-right-width: 1px; }
.sep.lit { width: 5px; background: #8c8c8c; height: 16px; border-left-width: 2px; }
.pick { display: flex; align-items: center; height: 16px; color: #7c7c7c; padding-right: 3px; }
.pick select { flex: 1; }
.chev { width: 7px; height: 7px; fill: none; stroke: #999; }
.pick.style { width: 87px; padding-left: 4px; }
.pick.wide { padding-left: 14px; }
.pick.space { width: 128px; padding-left: 7px; }
.pick.layer { width: 220px; padding-left: 3px; }
.marks { display: flex; }
.marks svg { width: 12px; height: 12px; fill: none; stroke: #555; }
.pick.layer select { margin-left: 4px; }
.pick.prop { width: 113px; padding-left: 2px; font-family: "Liberation Serif", serif; }
.pick.prop .marks { margin-right: 1px; }
.pick.weight { width: 90px; padding-left: 4px; }
.pick.plot { width: 88px; padding-left: 6px; font-family: "Liberation Mono", monospace; font-size: 8px; }
.rule { width: 26px; height: 1px; margin-right: 4px; background: #555; }
.rule.long { width: 43px; }

.work { flex: 1; min-height: 0; display: flex; padding-right: 2px; }
.side { width: 17px; align-self: flex-start; margin-left: 1px; background: #ececec; }
.side.right { margin-left: 3px; align-self: stretch; overflow: hidden; margin-bottom: 2px; }
.hgrip { height: 6px; background: repeating-linear-gradient(90deg, #777 0 1px, #444 1px 3px) center / 100% 2px no-repeat #505050; }
.hgrip.mid { margin-top: 1px; }
.hsep { height: 1px; margin: 2px 2px; background: #aaa; }
.doc { flex: 1; min-width: 0; display: flex; flex-direction: column; margin-left: 3px; border: 2px solid #c9c9c9; border-top: 1px solid #999; border-bottom-width: 1px; border-left-color: #9a9a9a; margin-bottom: 2px; }
.canvas { flex: 1; min-height: 0; position: relative; display: flex; background: #000; }
.scene { flex: 1; min-width: 0; height: 100%; overflow: hidden; background: #000; }
.axis { font: 14px "Liberation Sans", sans-serif; fill: #9c9c9c; }
.viewlabel { position: absolute; left: 3px; top: 2px; color: #ddd; }
.float { position: absolute; left: 25px; top: 16px; display: flex; height: 16px; }
.x { width: 6px; background: #555; color: #fff; align-items: flex-start; line-height: 9px; font-weight: bold; }
.cube { position: absolute; right: 19px; top: 20px; width: 76px; height: 88px; font-family: "Noto Sans CJK SC", sans-serif; }
.vscroll { width: 12px; background: #f0f0f0; display: flex; flex-direction: column; align-items: stretch; }
.vscroll .ic, .hscroll .ic { width: 10px; height: 12px; }
.vscroll .thumb { height: 13px; margin-top: 97px; margin-bottom: auto; background: #cdcdcd; }
.tabs { display: flex; align-items: stretch; height: 11px; background: #f5f5f5; }
.nav { width: 10px; border-right: 1px solid #ccc; }
.nav .ic { width: 9px; height: 9px; }
.tab { padding: 0 1px 0 3px; line-height: 11px; }
.tab.on { padding: 0 6px; margin: 0 2px 0 3px; background: #000; color: #fff; clip-path: polygon(0 0, 100% 0, 88% 100%, 12% 100%); }
.slash { width: 6px; height: 11px; fill: none; stroke: #333; }
.hscroll { display: flex; width: 34%; margin-left: auto; margin-right: 12px; border-left: 3px solid #bbb; padding-left: 2px; background: #f0f0f0; }
.hscroll .thumb { width: 14px; margin: 0 35% 0 auto; background: #cdcdcd; }

.cmd { display: grid; grid-template-columns: 12px 1fr; grid-template-rows: 30px 13px; flex: none; font: 10px/11px "Noto Sans CJK SC", sans-serif; color: #222; border-top: 1px solid #555; }
.cmdgrip { grid-row: 1 / 3; background: #9a9a9a; border-top: 3px double #666; }
.log { background: #c6c6c6; padding-top: 1px; border-bottom: 1px solid #aaa; }
.log p, .ask { display: flex; align-items: baseline; height: 11px; white-space: pre; }
.lat { font-family: "DejaVu Sans Mono", monospace; font-size: 9px; white-space: pre; }
.entry { display: flex; align-items: center; background: #fff; }
.entry input { flex: 1; height: 12px; }

.status { display: flex; height: 17px; flex: none; background: linear-gradient(#aaa, #858585); border-top: 1px solid #666; }
.coords { display: flex; align-items: center; width: 160px; padding-left: 8px; font: 8px/12px "DejaVu Sans Mono", monospace; gap: 10px; }
.coords .z { margin-left: 20px; }
.sb { width: 16px; border-right: 1px solid #777; }
.sb .ic { width: 13px; height: 13px; }
.sb.on { background: #b9dbe8; }
.tray2 { display: flex; margin-left: auto; }
.tray2 .model { width: 22px; border-left: 1px solid #777; color: #111; }
.tray2 .scale { width: 54px; }
.tray2 .lamp { width: 20px; background: #777; border: 1px solid #555; }

.task { display: flex; height: 29px; flex: none; background: #05171d; color: #eee; }
.start { width: 35px; }
.start svg { width: 12px; height: 12px; }
.search { display: flex; align-items: center; width: 252px; padding: 0 7px; gap: 6px; background: #f1f1f1; margin-right: 2px; color: #333; }
.search svg { width: 16px; height: 16px; }
.search input { flex: 1; font-size: 10px; }
.search input::placeholder { color: #444; opacity: 1; }
.ta { width: 30px; margin-right: 6px; border-bottom: 2px solid #76c8d8; }
.ta.cur { width: 35px; margin-right: 4px; background: #364348; }
.ta svg { width: 19px; height: 19px; }
.systray { display: flex; align-items: center; gap: 6px; margin-left: auto; }
.systray svg { width: 12px; height: 12px; fill: none; stroke: #eee; }
.systray span { font-size: 10px; margin-right: 4px; }
.systray b { width: 11px; height: 11px; line-height: 11px; background: #fff; color: #111; text-align: center; font-size: 10px; }
.clock { display: flex; flex-direction: column; align-items: center; justify-content: center; width: 56px; margin: 0 3px 0 6px; border-right: 1px solid #445; line-height: 13px; }

.mark { position: absolute; right: 50px; bottom: 22px; width: 190px; height: 90px; pointer-events: none; font-family: "Liberation Sans", "Noto Sans CJK SC", sans-serif; }
.heavy, .du, .han { font-weight: bold; }
.du { fill: #fff; stroke: #999; stroke-width: 1px; }
</style>
